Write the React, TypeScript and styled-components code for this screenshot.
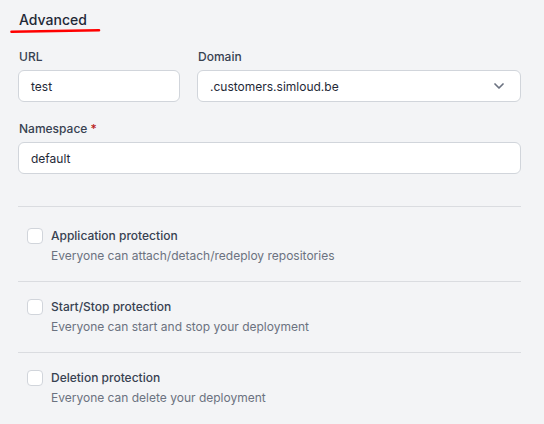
import React from "react";
import styled, { createGlobalStyle } from "styled-components";

const Global = createGlobalStyle`
  html, body {
    margin: 0;
    padding: 0;
    background: #f3f4f6;
  }
  body {
    font-family: Inter, "Noto Sans", sans-serif;
    -webkit-font-smoothing: antialiased;
  }
  * { box-sizing: border-box; }
`;

const Page = styled.div`
  width: 544px;
  height: 424px;
  padding: 10px 23px 0 18px;
  background: #f3f4f6;
  overflow: hidden;
`;

const TitleWrap = styled.div`
  position: relative;
  padding-left: 1px;
  margin-bottom: 19px;
`;

const Title = styled.h2`
  margin: 0;
  font-size: 14px;
  line-height: 20px;
  font-weight: 500;
  color: #1f2937;
`;

const Underline = styled.svg`
  position: absolute;
  left: -8px;
  top: 18px;
  overflow: visible;
`;

const Row = styled.div`
  display: grid;
  grid-template-columns: 1fr 2fr;
  column-gap: 17px;
  margin-bottom: 19px;
`;

const Field = styled.div`
  display: flex;
  flex-direction: column;
  min-width: 0;
`;

const Label = styled.label`
  padding-left: 1px;
  margin-bottom: 5px;
  font-size: 12px;
  line-height: 16px;
  font-weight: 500;
  color: #374151;
`;

const Required = styled.span`
  color: #b91c1c;
  margin-left: 3px;
`;

const Input = styled.div`
  height: 32px;
  display: flex;
  align-items: center;
  justify-content: space-between;
  padding: 0 16px 0 12px;
  background: #ffffff;
  border: 1px solid #d1d5db;
  border-radius: 6px;
  font-size: 12px;
  color: #1f2937;
`;

const Divider = styled.div`
  height: 1px;
  background: #dadce0;
  margin-top: 32px;
  margin-bottom: 4px;
`;

const Option = styled.div<{ $last?: boolean }>`
  display: flex;
  align-items: flex-start;
  gap: 8px;
  padding: 17px 9px;
  border-bottom: ${(p) => (p.$last ? "none" : "1px solid #dadce0")};
`;

const Box = styled.span`
  flex: none;
  width: 16px;
  height: 16px;
  background: #ffffff;
  border: 1px solid #d1d5db;
  border-radius: 4px;
`;

const OptionText = styled.div`
  display: flex;
  flex-direction: column;
  gap: 4px;
`;

const OptionTitle = styled.div`
  font-size: 12px;
  line-height: 16px;
  font-weight: 500;
  color: #374151;
`;

const OptionDesc = styled.div`
  font-size: 12px;
  line-height: 16px;
  color: #6b7280;
`;

const Chevron = () => (
  <svg width="10" height="6" viewBox="0 0 10 6" fill="none">
    <path d="M1 1 L5 5 L9 1" stroke="#6b7280" strokeWidth="1.7" strokeLinecap="round" strokeLinejoin="round" />
  </svg>
);

const options = [
  { title: "Application protection", desc: "Everyone can attach/detach/redeploy repositories" },
  { title: "Start/Stop protection", desc: "Everyone can start and stop your deployment" },
  { title: "Deletion protection", desc: "Everyone can delete your deployment" },
];

export default function App() {
  return (
    <Page>
      <Global />
      <TitleWrap>
        <Title>Advanced</Title>
        <Underline width="90" height="6" viewBox="0 0 90 6">
          <path d="M1.5 3.8 L89 2.3" stroke="#ff0000" strokeWidth="2.6" strokeLinecap="round" />
        </Underline>
      </TitleWrap>
      <Row>
        <Field>
          <Label>URL</Label>
          <Input>test</Input>
        </Field>
        <Field>
          <Label>Domain</Label>
          <Input>
            <span>.customers.simloud.be</span>
            <Chevron />
          </Input>
        </Field>
      </Row>
      <Field>
        <Label>
          Namespace<Required>*</Required>
        </Label>
        <Input>default</Input>
      </Field>
      <Divider />
      {options.map((o, i) => (
        <Option key={o.title} $last={i === options.length - 1}>
          <Box />
          <OptionText>
            <OptionTitle>{o.title}</OptionTitle>
            <OptionDesc>{o.desc}</OptionDesc>
          </OptionText>
        </Option>
      ))}
    </Page>
  );
}
